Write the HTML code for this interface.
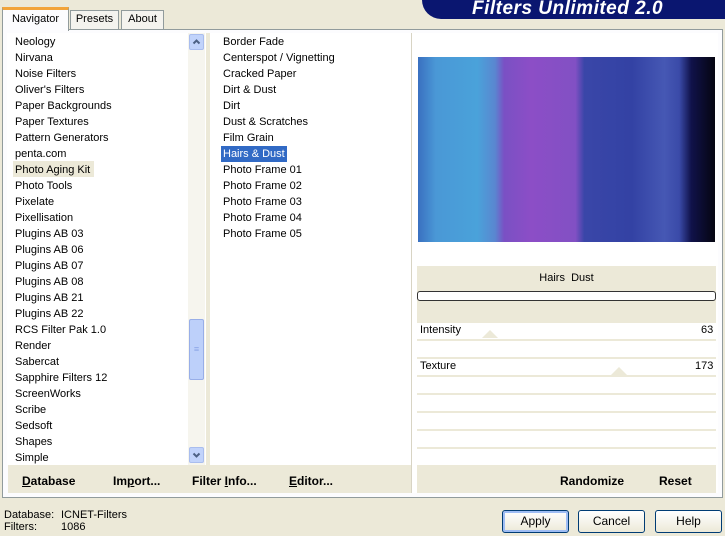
<!DOCTYPE html><html><head><style>
*{margin:0;padding:0;box-sizing:border-box}
body{width:725px;height:536px;background:#ece9d8;font-family:"Liberation Sans",sans-serif;font-size:11px;position:relative;overflow:hidden;color:#000}
.a{position:absolute}
.it{position:absolute;left:0;height:16px;line-height:16px;white-space:nowrap}
.btn{position:absolute;border:1px solid #003c74;border-radius:3px;background:linear-gradient(#fff,#ece9d8);text-align:center;line-height:21px;font-size:12px;height:23px}
.row{position:absolute;left:417px;width:299px;background:#fff}
b{font-size:12px}
</style></head><body>
<div class="a" style="left:422px;top:0;width:303px;height:19px;background:#0a1670;border-radius:0 0 0 22px"></div>
<div class="a" style="left:472px;top:-2px;color:#fff;font-size:19px;font-weight:bold;font-style:italic;letter-spacing:0.5px">Filters Unlimited 2.0</div>
<div class="a" style="left:70px;top:10px;width:49px;height:19px;border:1px solid #919b9c;border-bottom:none;background:#f4f3ee;text-align:center;line-height:17px;font-size:11px">Presets</div>
<div class="a" style="left:121px;top:10px;width:43px;height:19px;border:1px solid #919b9c;border-bottom:none;background:#f4f3ee;text-align:center;line-height:17px">About</div>
<div class="a" style="left:2px;top:29px;width:721px;height:469px;border:1px solid #919b9c;background:#fcfcfe"></div>
<div class="a" style="left:2px;top:7px;width:67px;height:24px;border:1px solid #919b9c;border-top:3px solid #f2a43a;border-bottom:none;background:#fcfcfe;text-align:center;line-height:19px">Navigator</div>
<div class="a" style="left:7px;top:33px;width:199px;height:432px;background:#fff;overflow:hidden">
<div class="a" style="left:6px;top:128px;width:81px;height:16px;background:#ece9d8"></div>
<div class="a" style="left:8px;top:1px">
<div class="it" style="top:0">Neology</div><div class="it" style="top:16px">Nirvana</div><div class="it" style="top:32px">Noise Filters</div><div class="it" style="top:48px">Oliver's Filters</div><div class="it" style="top:64px">Paper Backgrounds</div><div class="it" style="top:80px">Paper Textures</div><div class="it" style="top:96px">Pattern Generators</div><div class="it" style="top:112px">penta.com</div><div class="it" style="top:128px">Photo Aging Kit</div><div class="it" style="top:144px">Photo Tools</div><div class="it" style="top:160px">Pixelate</div><div class="it" style="top:176px">Pixellisation</div><div class="it" style="top:192px">Plugins AB 03</div><div class="it" style="top:208px">Plugins AB 06</div><div class="it" style="top:224px">Plugins AB 07</div><div class="it" style="top:240px">Plugins AB 08</div><div class="it" style="top:256px">Plugins AB 21</div><div class="it" style="top:272px">Plugins AB 22</div><div class="it" style="top:288px">RCS Filter Pak 1.0</div><div class="it" style="top:304px">Render</div><div class="it" style="top:320px">Sabercat</div><div class="it" style="top:336px">Sapphire Filters 12</div><div class="it" style="top:352px">ScreenWorks</div><div class="it" style="top:368px">Scribe</div><div class="it" style="top:384px">Sedsoft</div><div class="it" style="top:400px">Shapes</div><div class="it" style="top:416px">Simple</div>
</div>
<div class="a" style="left:181px;top:0;width:17px;height:432px;background:#f6f5ee"></div>
<div class="a" style="left:182px;top:1px;width:15px;height:16px;background:#c1d3fb;border:1px solid #a9bdee;border-radius:2px"><svg width="13" height="14" style="position:absolute;left:0;top:0"><path d="M3.5 8.5L6.5 5.5L9.5 8.5" stroke="#4d6185" stroke-width="2" fill="none"/></svg></div>
<div class="a" style="left:182px;top:286px;width:15px;height:61px;background:#bdd0fa;border:1px solid #98aee8;border-radius:2px;color:#8aa4e6;text-align:center;line-height:58px;font-size:9px">&#8801;</div>
<div class="a" style="left:182px;top:414px;width:15px;height:16px;background:#c1d3fb;border:1px solid #a9bdee;border-radius:2px"><svg width="13" height="14" style="position:absolute;left:0;top:0"><path d="M3.5 5.5L6.5 8.5L9.5 5.5" stroke="#4d6185" stroke-width="2" fill="none"/></svg></div>
</div>
<div class="a" style="left:206px;top:33px;width:4px;height:432px;background:#ece9d8"></div>
<div class="a" style="left:210px;top:33px;width:201px;height:432px;background:#fff">
<div class="a" style="left:11px;top:113px;width:66px;height:16px;background:#316ac5"></div>
<div class="a" style="left:13px;top:1px">
<div class="it" style="top:0">Border Fade</div><div class="it" style="top:16px">Centerspot / Vignetting</div><div class="it" style="top:32px">Cracked Paper</div><div class="it" style="top:48px">Dirt &amp; Dust</div><div class="it" style="top:64px">Dirt</div><div class="it" style="top:80px">Dust &amp; Scratches</div><div class="it" style="top:96px">Film Grain</div><div class="it" style="top:112px;color:#fff">Hairs &amp; Dust</div><div class="it" style="top:128px">Photo Frame 01</div><div class="it" style="top:144px">Photo Frame 02</div><div class="it" style="top:160px">Photo Frame 03</div><div class="it" style="top:176px">Photo Frame 04</div><div class="it" style="top:192px">Photo Frame 05</div>
</div></div>
<div class="a" style="left:8px;top:465px;width:404px;height:28px;background:#ece9d8"></div>
<div class="a" style="left:22px;top:474px"><b><u>D</u>atabase</b></div>
<div class="a" style="left:113px;top:474px"><b>Im<u>p</u>ort...</b></div>
<div class="a" style="left:192px;top:474px"><b>Filter <u>I</u>nfo...</b></div>
<div class="a" style="left:289px;top:474px"><b><u>E</u>ditor...</b></div>
<div class="a" style="left:411px;top:33px;width:1px;height:460px;background:#d8d4c4"></div>
<div class="a" style="left:412px;top:33px;width:306px;height:460px;background:#fff"></div>
<div class="a" style="left:418px;top:57px;width:297px;height:185px;background:
linear-gradient(90deg,#3a70c0 0%,#4a98d6 6%,#4aa2da 20%,#5a86d0 26%,#7a50c4 29%,#8c4ec6 38%,#8250c4 53%,#3a46a8 56%,#3342a4 72%,#4658b4 83%,#3a4aa8 88%,#10124a 92%,#050510 100%)"></div>
<div class="a" style="left:417px;top:266px;width:299px;height:198px;background:#ece9d8"></div>
<div class="a" style="left:417px;top:272px;width:299px;text-align:center;font-size:11px">Hairs&nbsp; Dust</div>
<div class="a" style="left:417px;top:291px;width:299px;height:10px;border:1px solid #333;border-radius:3px;background:#fff"></div>
<div class="row" style="top:323px;height:16px"></div>
<div class="a" style="left:482px;top:330px;width:0;height:0;border-left:8px solid transparent;border-right:8px solid transparent;border-bottom:8px solid #ece9d8"></div>
<div class="a" style="left:420px;top:324px">Intensity</div><div class="a" style="left:701px;top:324px">63</div>
<div class="row" style="top:341px;height:16px"></div>
<div class="row" style="top:359px;height:16px"></div>
<div class="a" style="left:611px;top:367px;width:0;height:0;border-left:8px solid transparent;border-right:8px solid transparent;border-bottom:8px solid #ece9d8"></div>
<div class="a" style="left:420px;top:360px">Texture</div><div class="a" style="left:695px;top:360px">173</div>
<div class="row" style="top:377px;height:16px"></div>
<div class="row" style="top:395px;height:16px"></div>
<div class="row" style="top:413px;height:16px"></div>
<div class="row" style="top:431px;height:16px"></div>
<div class="row" style="top:449px;height:15px"></div>
<div class="a" style="left:417px;top:465px;width:299px;height:28px;background:#ece9d8"></div>
<div class="a" style="left:560px;top:474px"><b>Randomize</b></div>
<div class="a" style="left:659px;top:474px"><b>Reset</b></div>
<div class="a" style="left:4px;top:509px;line-height:12px">Database:<br>Filters:</div>
<div class="a" style="left:61px;top:509px;line-height:12px">ICNET-Filters<br>1086</div>
<div class="btn" style="left:502px;top:510px;width:67px;box-shadow:inset 0 0 0 2px #9fbdf4">Apply</div>
<div class="btn" style="left:578px;top:510px;width:67px">Cancel</div>
<div class="btn" style="left:655px;top:510px;width:67px">Help</div>
</body></html>
